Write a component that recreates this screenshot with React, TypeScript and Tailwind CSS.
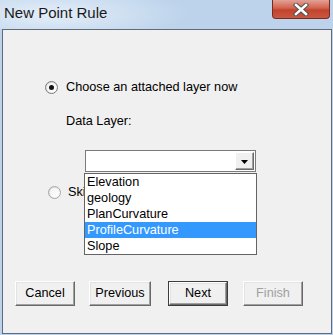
import React from "react";

const font = { fontFamily: '"Liberation Sans", Arial, sans-serif' };

function Radio({ checked }: { checked?: boolean }) {
  return (
    <div
      className={`w-[13px] h-[13px] rounded-full border flex items-center justify-center shrink-0 ${
        checked ? "border-[#7b7b7b]" : "border-[#a8a8a8]"
      } bg-[linear-gradient(135deg,#d6d6d6,#ffffff)]`}
    >
      <div className="w-[9px] h-[9px] rounded-full bg-[linear-gradient(135deg,#f2f2f2,#ffffff)] flex items-center justify-center">
        {checked && <div className="w-[5px] h-[5px] rounded-full bg-[#111]" />}
      </div>
    </div>
  );
}

function Btn({
  label,
  w,
  def,
  disabled,
}: {
  label: string;
  w: string;
  def?: boolean;
  disabled?: boolean;
}) {
  return (
    <div
      className={`${w} h-[25px] shrink-0 ${
        def ? "border border-[#3c3c3c]" : ""
      } flex`}
    >
      <div
        className={`flex-1 flex items-center justify-center bg-[#f0f0f0] border-t border-l border-t-white border-l-white border-r border-b border-r-[#696969] border-b-[#696969] shadow-[inset_-1px_-1px_0_#a0a0a0,inset_1px_1px_0_#e3e3e3] text-[12.7px] ${
          disabled ? "text-[#a0a0a0]" : "text-black"
        }`}
      >
        {label}
      </div>
    </div>
  );
}

export default function App() {
  const items = ["Elevation", "geology", "PlanCurvature", "ProfileCurvature", "Slope"];
  return (
    <div
      className="w-[333px] h-[335px] flex flex-col bg-[#bcd3eb] overflow-hidden"
      style={font}
    >
      {/* title bar */}
      <div className="h-[29px] shrink-0 flex items-start justify-between bg-[radial-gradient(ellipse_140px_30px_at_50px_14px,#e4eef9,transparent)]">
        <div className="pl-[4px] pt-[4px] text-[15px] leading-[18px] text-[#1a1a1a]">
          New Point Rule
        </div>
        <div className="mr-[3px] w-[58px] h-[19px] rounded-b-[4px] border border-t-0 border-[#7c2a20] bg-[linear-gradient(#e2a195,#d1634f_45%,#c2432d_55%,#c9583f)] flex items-center justify-center">
          <svg width="16" height="13" viewBox="0 0 16 13">
            <path
              d="M3 2 L13 11 M13 2 L3 11"
              stroke="#4d4d4d"
              strokeWidth="4.4"
              strokeLinecap="square"
            />
            <path
              d="M3 2 L13 11 M13 2 L3 11"
              stroke="#ffffff"
              strokeWidth="2.6"
              strokeLinecap="square"
            />
          </svg>
        </div>
      </div>

      {/* client */}
      <div className="ml-[2px] mr-[1px] mb-[1px] flex-1 border border-[#5f6b78] bg-[#f0f0f0] flex flex-col text-[12.7px] text-black">
        <div className="mt-[51px] ml-[42px] h-[13px] flex items-center gap-[8px]">
          <Radio checked />
          <span className="leading-[15px]">Choose an attached layer now</span>
        </div>

        <div className="mt-[20px] ml-[63px] leading-[15px]">Data Layer:</div>

        <div className="mt-[21px] ml-[82px] w-[171px] h-[22px] relative">
          <div className="w-full h-full border border-[#7a7a7a] bg-white flex justify-end p-[1px]">
            <div className="w-[19px] h-full bg-[#f0f0f0] border-t border-l border-t-white border-l-white border-r border-b border-r-[#696969] border-b-[#696969] shadow-[inset_-1px_-1px_0_#a0a0a0] flex items-center justify-center">
              <svg width="7" height="4" viewBox="0 0 7 4" className="mt-[2px]">
                <path d="M0 0 H7 L3.5 4 Z" fill="#000" />
              </svg>
            </div>
          </div>
          {/* dropdown list popup */}
          <div className="absolute top-[23px] left-[-1px] w-[173px] h-[82px] border border-[#646464] bg-white z-10 flex flex-col">
            {items.map((it) => (
              <div
                key={it}
                className={`h-[16px] pl-[2px] leading-[16px] text-[12.7px] ${
                  it === "ProfileCurvature" ? "bg-[#3399ff] text-white" : "text-black"
                }`}
              >
                {it}
              </div>
            ))}
          </div>
        </div>

        <div className="mt-[14px] ml-[45px] h-[13px] flex items-center gap-[7px]">
          <Radio />
          <span className="leading-[15px] whitespace-nowrap w-[16px] overflow-hidden">
            Skip
          </span>
        </div>

        <div className="mt-auto mb-[27px] ml-[12px] flex">
          <Btn label="Cancel" w="w-[60px]" />
          <div className="w-[14px]" />
          <Btn label="Previous" w="w-[62px]" />
          <div className="w-[17px]" />
          <Btn label="Next" w="w-[60px]" def />
          <div className="w-[15px]" />
          <Btn label="Finish" w="w-[60px]" disabled />
        </div>
      </div>
    </div>
  );
}
